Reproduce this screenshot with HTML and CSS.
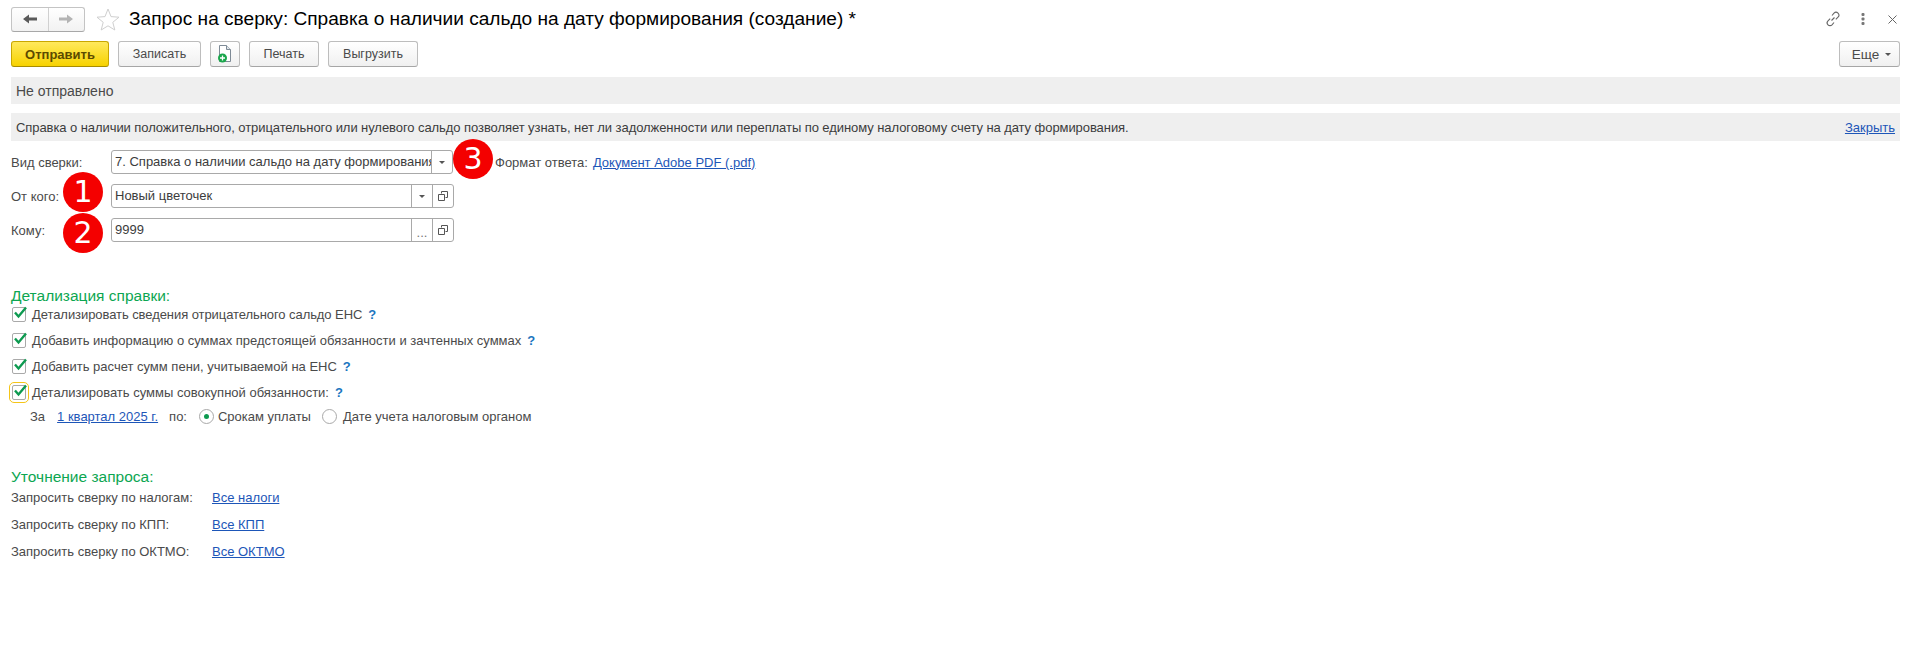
FILE: index.html
```html
<!DOCTYPE html>
<html lang="ru">
<head>
<meta charset="utf-8">
<title>Запрос на сверку</title>
<link rel="stylesheet" href="styles.css">
</head>
<body>
<div class="page">
  <header class="titlebar">
    <div class="nav">
      <span class="nav-btn"><svg width="14" height="10" viewBox="0 0 14 10"><path d="M0 5l6-4.500v3h8v3H6v3z" fill="#5a5a5a"/></svg></span>
      <span class="nav-btn"><svg width="14" height="10" viewBox="0 0 14 10"><path d="M14 5L8 .5v3H0v3h8v3z" fill="#b4b4b4"/></svg></span>
    </div>
    <svg class="star" width="24" height="23" viewBox="0 0 24 23"><path d="M12 1l3 7.600 8 .6-6.200 5.100 2 7.700L12 17.800 5.200 22l2-7.700L1 9.200l8-.6z" fill="#fff" stroke="#cfcfcf"/></svg>
    <h1 class="title">Запрос на сверку: Справка о наличии сальдо на дату формирования (создание) *</h1>
    <div class="win-icons">
      <svg width="16" height="16" viewBox="0 0 16 16" fill="none" stroke="#666" stroke-width="1.100"><path d="M6.500 9.500l3-3M7 4.500l2-2.300a2.800 2.800 0 0 1 4 4l-2.200 2.200M9 11.500l-2 2.300a2.800 2.800 0 0 1-4-4l2.200-2.200"/></svg>
      <svg width="4" height="12" viewBox="0 0 4 12" fill="#777"><rect x="0.500" width="3" height="3" rx="1"/><rect x="0.500" y="4.500" width="3" height="3" rx="1"/><rect x="0.500" y="9" width="3" height="3" rx="1"/></svg>
      <svg class="close" width="9" height="9" viewBox="0 0 9 9" stroke="#666" fill="none"><path d="M.5.500l8 8M8.500.500l-8 8"/></svg>
    </div>
  </header>

  <div class="toolbar">
    <button class="btn primary w-send">Отправить</button>
    <button class="btn w-save">Записать</button>
    <button class="btn w-icon"><svg width="16" height="20" viewBox="0 0 16 20"><path d="M2.500 1.500h7l4 4v12h-11z" fill="#fff" stroke="#7e8a96"/><path d="M9.500 1.500v4h4" fill="#dfe5ea" stroke="#7e8a96"/><circle cx="5.500" cy="14" r="4.500" fill="#1aa64b"/><path d="M3 14h5M5.500 11.500v5" stroke="#fff" stroke-width="1.300"/></svg></button>
    <button class="btn w-print">Печать</button>
    <button class="btn w-export">Выгрузить</button>
    <button class="btn w-more">Еще <i class="caret"></i></button>
  </div>

  <div class="bar status">Не отправлено</div>
  <div class="bar note">
    <span class="note-text">Справка о наличии положительного, отрицательного или нулевого сальдо позволяет узнать, нет ли задолженности или переплаты по единому налоговому счету на дату формирования.</span>
    <a href="#" class="link">Закрыть</a>
  </div>

  <section class="fields">
    <div class="field">
      <label class="lbl">Вид сверки:</label>
      <div class="input i-kind">
        <span class="val">7. Справка о наличии сальдо на дату формирования</span>
        <span class="addon"><i class="caret"></i></span>
      </div>
      <span class="fmt">Формат ответа:</span>
      <a href="#" class="link">Документ Adobe PDF (.pdf)</a>
    </div>
    <div class="field">
      <label class="lbl">От кого:</label>
      <div class="input">
        <span class="val">Новый цветочек</span>
        <span class="addon"><i class="caret"></i></span>
        <span class="addon"><svg width="10" height="10" viewBox="0 0 10 10" fill="none" stroke="#555"><path d="M3.500 2.500V.5h6v6h-2M.5 3.500h6v6h-6z"/></svg></span>
      </div>
    </div>
    <div class="field">
      <label class="lbl">Кому:</label>
      <div class="input">
        <span class="val">9999</span>
        <span class="addon dots">...</span>
        <span class="addon"><svg width="10" height="10" viewBox="0 0 10 10" fill="none" stroke="#555"><path d="M3.500 2.500V.5h6v6h-2M.5 3.500h6v6h-6z"/></svg></span>
      </div>
    </div>
  </section>

  <section class="details">
    <h2 class="group">Детализация справки:</h2>
    <div class="check"><i class="box"><svg width="15" height="14" viewBox="0 0 15 14"><path d="M2 6.500l3.500 4L13 1.500" fill="none" stroke="#0d9a50" stroke-width="2.400"/></svg></i><span class="tight">Детализировать сведения отрицательного сальдо ЕНС</span><b class="help">?</b></div>
    <div class="check"><i class="box"><svg width="15" height="14" viewBox="0 0 15 14"><path d="M2 6.500l3.500 4L13 1.500" fill="none" stroke="#0d9a50" stroke-width="2.400"/></svg></i><span>Добавить информацию о суммах предстоящей обязанности и зачтенных суммах</span><b class="help">?</b></div>
    <div class="check"><i class="box"><svg width="15" height="14" viewBox="0 0 15 14"><path d="M2 6.500l3.500 4L13 1.500" fill="none" stroke="#0d9a50" stroke-width="2.400"/></svg></i><span>Добавить расчет сумм пени, учитываемой на ЕНС</span><b class="help">?</b></div>
    <div class="check focused"><i class="box"><svg width="15" height="14" viewBox="0 0 15 14"><path d="M2 6.500l3.500 4L13 1.500" fill="none" stroke="#0d9a50" stroke-width="2.400"/></svg></i><span>Детализировать суммы совокупной обязанности:</span><b class="help">?</b></div>
    <div class="period">
      <span>За</span>
      <a href="#" class="link">1 квартал 2025 г.</a>
      <span>по:</span>
      <i class="radio on"></i><span>Срокам уплаты</span>
      <i class="radio"></i><span>Дате учета налоговым органом</span>
    </div>
  </section>

  <section class="refine">
    <h2 class="group">Уточнение запроса:</h2>
    <div class="ref-row"><span class="ref-lbl">Запросить сверку по налогам:</span><a href="#" class="link">Все налоги</a></div>
    <div class="ref-row"><span class="ref-lbl">Запросить сверку по КПП:</span><a href="#" class="link">Все КПП</a></div>
    <div class="ref-row"><span class="ref-lbl">Запросить сверку по ОКТМО:</span><a href="#" class="link">Все ОКТМО</a></div>
  </section>

  <span class="badge b1">1</span>
  <span class="badge b2">2</span>
  <span class="badge b3">3</span>
</div>
</body>
</html>
```
FILE: styles.css
```css
* { box-sizing: border-box; }
html, body { margin: 0; background: #fff; }
.page {
  position: relative;
  height: 660px;
  overflow: hidden;
  padding: 0 16px 0 11px;
  font: 13px "Liberation Sans", Arial, sans-serif;
  color: #4a4a4a;
}
.titlebar { display: flex; align-items: center; height: 38px; }
.nav {
  display: flex; width: 74px; height: 25px;
  border: 1px solid #c4c4c4; border-bottom-color: #a8a8a8; border-radius: 3px;
  background: linear-gradient(#fff, #f2f2f2);
}
.nav-btn { flex: 1; display: flex; align-items: center; justify-content: center; }
.nav-btn + .nav-btn { border-left: 1px solid #d0d0d0; }
.star { margin-left: 11px; }
.title { margin: 0 0 0 9px; font-size: 19.1px; font-weight: 400; color: #000; white-space: nowrap; }
.win-icons { margin-left: auto; display: flex; align-items: center; gap: 20px; padding-right: 3px; }
.close { margin-left: 3px; }
.toolbar { display: flex; gap: 9px; height: 26px; margin-top: 3px; }
.btn {
  height: 26px; padding: 0; font: 12.5px "Liberation Sans", Arial, sans-serif; color: #4a4a4a;
  border: 1px solid #bdbdbd; border-bottom-color: #a6a6a6; border-radius: 3px;
  background: linear-gradient(#fff, #f0f0f0);
  display: flex; align-items: center; justify-content: center;
}
.primary {
  font-weight: 700; font-size: 13px; color: #5c4a00;
  border-color: #c9a700; border-bottom-color: #a88c00;
  background: linear-gradient(#ffe95c, #f7d200);
}
.w-send { width: 98px; }
.w-save { width: 83px; }
.w-icon { width: 30px; }
.w-print { width: 70px; }
.w-export { width: 90px; }
.w-more { width: 61px; margin-left: auto; gap: 6px; padding-left: 4px; font-size: 13.5px; }
.caret { display: inline-block; width: 0; height: 0; border: 3px solid transparent; border-top: 3px solid #555; border-bottom: 0; }
.bar { display: flex; align-items: center; background: #efefef; padding: 0 5px; }
.status { height: 27px; margin-top: 10px; font-size: 14px; }
.note { height: 28px; margin-top: 9px; justify-content: space-between; color: #3c3c3c; }
.note-text { letter-spacing: -0.07px; }
.link { color: #1d56b8; text-decoration: underline; }
.fields { margin-top: 9px; display: flex; flex-direction: column; gap: 10px; }
.field { display: flex; align-items: center; height: 24px; }
.lbl { width: 100px; }
.input {
  display: flex; width: 343px; height: 24px;
  border: 1px solid #a9a9a9; border-radius: 3px; background: #fff;
}
.i-kind { width: 342px; }
.val { flex: 1; min-width: 0; padding-left: 3px; line-height: 22px; white-space: nowrap; overflow: hidden; color: #3c3c3c; }
.addon { width: 21px; flex: none; display: flex; align-items: center; justify-content: center; border-left: 1px solid #a9a9a9; }
.dots { color: #777; padding-top: 4px; }
.fmt { margin-left: 42px; }
.fmt + .link { margin-left: 5px; }
.details { margin-top: 44px; }
.group { margin: 0; font-size: 15.5px; font-weight: 400; color: #0ca651; line-height: 20px; }
.check { display: flex; align-items: center; height: 26px; position: relative; }
.details .group { margin-bottom: -5px; }
.tight { letter-spacing: -0.07px; }
.box {
  width: 14px; height: 15px; margin: 0 6px 0 1px; position: relative; flex: none;
  border: 1px solid #a9a9a9; border-radius: 2px; background: #fff;
}
.box svg { position: absolute; left: 0; top: -2px; }
.focused .box { outline: 1px solid #f5c518; outline-offset: 2px; }
.help { margin-left: 6px; color: #1b76c0; font-weight: 700; }
.period { display: flex; align-items: center; height: 20px; margin-top: 1px; padding-left: 19px; }
.period .link { margin-left: 12px; }
.period .link + span { margin-left: 11px; }
.radio { width: 15px; height: 15px; border: 1px solid #a9a9a9; border-radius: 50%; position: relative; margin-left: 11px; margin-right: 6px; }
.radio.on { margin-left: 12px; margin-right: 4px; }
.radio.on::after { content: ""; position: absolute; left: 4px; top: 4px; width: 5px; height: 5px; border-radius: 50%; background: #0d9a50; }
.refine { margin-top: 41px; }
.refine .group { margin-bottom: -3px; }
.ref-row { display: flex; align-items: center; height: 27px; }
.ref-lbl { width: 201px; }
.badge {
  position: absolute; width: 40px; height: 40px; border-radius: 50%;
  background: #f40000; color: #fff; font: 30px/40px "DejaVu Sans", sans-serif; text-align: center;
}
.b1 { left: 63px; top: 172px; }
.b2 { left: 63px; top: 213px; }
.b3 { left: 453px; top: 139px; }
```
